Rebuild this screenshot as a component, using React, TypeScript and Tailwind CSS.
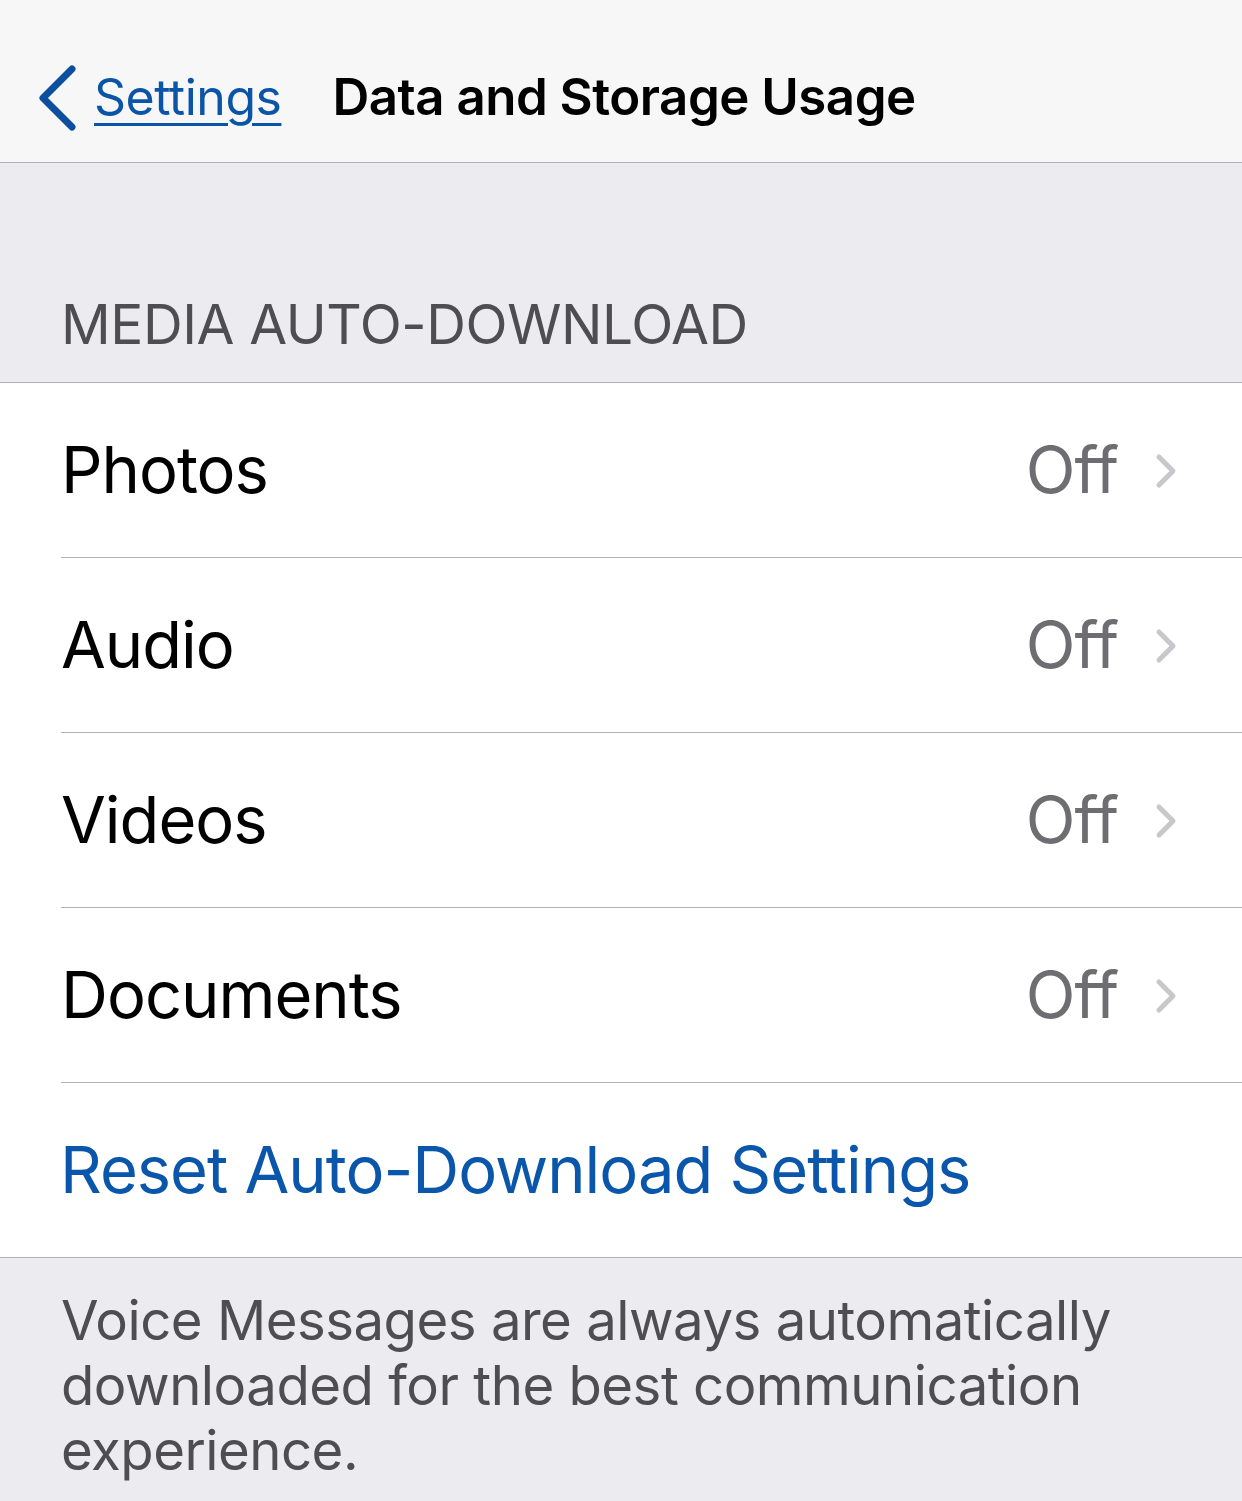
import React from 'react';

const rows = ['Photos', 'Audio', 'Videos', 'Documents'];

function Chevron() {
  return (
    <svg width="24" height="38" viewBox="0 0 24 38" className="ml-[36px] mt-[2px]">
      <path d="M5 5 L19 19 L5 33" fill="none" stroke="#c7c7cc" strokeWidth="5" strokeLinecap="round" strokeLinejoin="round" />
    </svg>
  );
}

export default function App() {
  return (
    <div className="w-[1242px] h-[1501px] overflow-hidden bg-[#ebebf0] font-['Inter',sans-serif]">
      {/* Nav bar */}
      <div className="h-[163px] bg-[#f7f7f7] border-b border-[#b2b2b6] flex items-center pt-[32px]">
        <svg width="44" height="70" viewBox="0 0 44 70" className="ml-[35px] mt-[2px]">
          <path d="M37 6 L8 35 L37 64" fill="none" stroke="#0b4f9e" strokeWidth="7" strokeLinecap="round" strokeLinejoin="round" />
        </svg>
        <span className="ml-[15px] text-[50px] text-[#0b55a8] underline underline-offset-[8px] decoration-[3px] tracking-[-0.5px]">
          Settings
        </span>
        <span className="ml-[51px] text-[51px] font-semibold text-black tracking-[-0.5px]">
          Data and Storage Usage
        </span>
      </div>

      {/* Section header */}
      <div className="h-[220px] flex items-end pl-[61px] pb-[30px] border-b border-[#b2b2b6]">
        <span className="text-[55px] text-[#4d4d52] tracking-[-0.4px] leading-none">MEDIA AUTO-DOWNLOAD</span>
      </div>

      {/* Rows */}
      <div className="bg-white border-b border-[#b2b2b6]">
        {rows.map((r) => (
          <div key={r} className="pl-[61px]">
            <div className="h-[175px] flex items-center pr-[64px] border-b border-[#b2b2b6]">
              <span className="text-[65px] text-black tracking-[-1px] flex-1">{r}</span>
              <span className="text-[65px] text-[#6d6d72] tracking-[-1px]">Off</span>
              <Chevron />
            </div>
          </div>
        ))}
        <div className="h-[174px] flex items-center pl-[60px]">
          <span className="text-[65px] text-[#0a56ab] tracking-[-1px]">Reset Auto-Download Settings</span>
        </div>
      </div>

      {/* Footer */}
      <div className="pl-[61px] pr-[40px] pt-[30px]">
        <p className="text-[54.5px] leading-[65px] text-[#4d4d52] tracking-[-0.5px]">
          Voice Messages are always automatically downloaded for the best communication experience.
        </p>
      </div>
    </div>
  );
}
